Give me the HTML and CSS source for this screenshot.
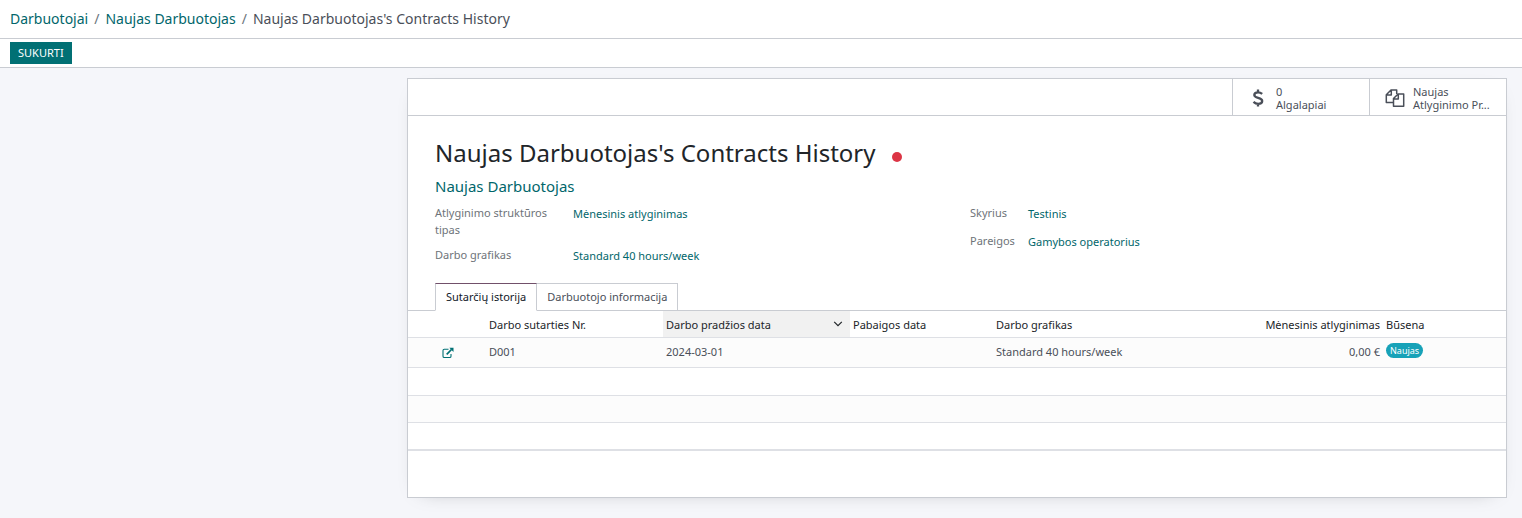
FILE: index.html
```html
<!DOCTYPE html>
<html lang="lt">
<head>
<meta charset="utf-8">
<title>Naujas Darbuotojas's Contracts History</title>
<link rel="stylesheet" href="styles.css">
</head>
<body>
<header class="control-panel">
  <nav class="breadcrumb" aria-label="Breadcrumb">
    <a href="#">Darbuotojai</a><span class="sep">/</span><a href="#">Naujas Darbuotojas</a><span class="sep">/</span><span>Naujas Darbuotojas's Contracts History</span>
  </nav>
</header>
<div class="statusbar"><button class="btn-primary" type="button">SUKURTI</button></div>
<main class="content">
  <section class="sheet">
    <div class="button-box">
      <button class="stat-button" type="button">
        <svg class="stat-icon" viewBox="0 0 20 20" aria-hidden="true"><path d="M14.2 5.9C13 4.9 11.700 4.300 10 4.300c-2.300 0-3.700 1.100-3.700 2.700 0 3.700 7.900 2 7.900 5.900 0 1.800-1.600 2.900-4 2.900-1.900 0-3.400-.7-4.700-1.900M10 1.500v3M10 15.500v3" fill="none" stroke="currentColor" stroke-width="2.300"/></svg>
        <span class="stat-text"><span>0</span><span>Algalapiai</span></span>
      </button>
      <button class="stat-button" type="button">
        <svg class="stat-icon" viewBox="0 0 20 20" aria-hidden="true"><path d="M8.500 14.500H1.300V6.700L6 1.900h5.700v4M6.300 1.900v5H1.300M8.500 10.600l4.600-4.700h5.600v12.400H8.500zM13.300 5.900v5H8.500" fill="none" stroke="currentColor" stroke-width="1.500" stroke-linejoin="round"/></svg>
        <span class="stat-text"><span>Naujas</span><span>Atlyginimo Pr...</span></span>
      </button>
    </div>
    <div class="sheet-body">
      <div class="title-row">
        <h1 class="title">Naujas Darbuotojas's Contracts History</h1>
        <span class="state-dot"></span>
      </div>
      <h2 class="subtitle"><a href="#">Naujas Darbuotojas</a></h2>
      <div class="groups">
        <dl class="group group-wide">
          <dt>Atlyginimo struktūros tipas</dt><dd><a href="#">Mėnesinis atlyginimas</a></dd>
          <dt>Darbo grafikas</dt><dd><a href="#">Standard 40 hours/week</a></dd>
        </dl>
        <dl class="group group-narrow">
          <dt>Skyrius</dt><dd><a href="#">Testinis</a></dd>
          <dt>Pareigos</dt><dd><a href="#">Gamybos operatorius</a></dd>
        </dl>
      </div>
    </div>
    <div class="tabs" role="tablist">
      <button class="tab tab-active" type="button" role="tab" aria-selected="true">Sutarčių istorija</button>
      <button class="tab" type="button" role="tab" aria-selected="false">Darbuotojo informacija</button>
    </div>
    <table class="list">
      <colgroup><col class="c-open"><col class="c-name"><col class="c-start"><col class="c-end"><col class="c-schedule"><col class="c-wage"><col class="c-state"></colgroup>
      <thead>
        <tr>
          <th></th><th>Darbo sutarties Nr.</th>
          <th class="sorted"><div class="sort-head"><span>Darbo pradžios data</span><svg class="chevron" viewBox="0 0 10 10" aria-hidden="true"><path d="M1.200 1.800L5 5.600l3.800-3.800" fill="none" stroke="currentColor" stroke-width="1.200"/></svg></div></th>
          <th>Pabaigos data</th><th>Darbo grafikas</th><th class="num">Mėnesinis atlyginimas</th><th>Būsena</th>
        </tr>
      </thead>
      <tbody>
        <tr class="record">
          <td class="open-cell"><button class="open-button" type="button" aria-label="Open"><svg class="open-icon" viewBox="0 0 12 12" aria-hidden="true"><path d="M6.500 2.300H2.300Q1 2.300 1 3.600v5.600q0 1.300 1.300 1.300h5.400Q9 10.500 9 9.200V7" fill="none" stroke="currentColor" stroke-width="1.100"/><path d="M4.700 7.300L9.500 2.500" stroke="currentColor" stroke-width="1.700"/><path d="M7.300.8h4.200V5z" fill="currentColor"/></svg></button></td>
          <td>D001</td><td>2024-03-01</td><td></td><td>Standard 40 hours/week</td><td class="num">0,00 €</td><td><span class="badge">Naujas</span></td>
        </tr>
        <tr><td colspan="7"></td></tr>
        <tr><td colspan="7"></td></tr>
        <tr><td colspan="7"></td></tr>
      </tbody>
    </table>
  </section>
</main>
</body>
</html>
```
FILE: styles.css
```css
* { box-sizing: border-box; }
body {
  margin: 0;
  min-height: 100vh;
  background: #f5f6fa;
  color: #4a4f59;
  font: 11px/17px "Noto Sans", "Open Sans", sans-serif;
}
a { color: #01666b; text-decoration: none; }
button { font: inherit; color: inherit; background: none; border: 0; padding: 0; cursor: pointer; }
.control-panel {
  padding: 9px 10px;
  background: #fff;
  border-bottom: 1px solid #c9ccd2;
}
.breadcrumb { font-size: 14px; line-height: 20px; }
.sep { padding: 0 6px; color: #6c757d; }
.statusbar {
  display: flex;
  padding: 3px 10px;
  background: #fff;
  border-bottom: 1px solid #c9ccd2;
}
.btn-primary {
  padding: 0 8px;
  background: #017074;
  color: #fff;
  line-height: 22px;
}
.content { display: flex; justify-content: flex-end; padding: 10px 15px 20px; }
.sheet {
  flex: 0 1 1100px;
  min-width: 0;
  padding-bottom: 46px;
  background: #fff;
  border: 1px solid #c9ccd2;
  box-shadow: 0 5px 20px -15px rgba(0, 0, 0, 0.4);
}
.button-box { display: flex; justify-content: flex-end; border-bottom: 1px solid #c9ccd2; }
.stat-button {
  display: flex;
  align-items: center;
  gap: 8px;
  width: 137px;
  height: 36px;
  padding: 2px 14px 0 15px;
  border-left: 1px solid #c9ccd2;
  line-height: 13px;
  text-align: left;
}
.stat-icon { flex: none; width: 20px; height: 20px; }
.stat-text { display: flex; flex-direction: column; white-space: nowrap; }
.sheet-body { padding: 20px 27px 0; }
.title-row { display: flex; align-items: center; gap: 16px; }
.title { margin: 0; color: #212529; font-size: 24px; font-weight: 400; line-height: 34px; }
.state-dot { width: 10px; height: 10px; margin-top: 8px; border-radius: 50%; background: #dc3545; }
.subtitle { margin: 6px 0 0; font-size: 15px; font-weight: 400; line-height: 20px; }
.groups { display: grid; grid-template-columns: 1fr 1fr; gap: 26px; margin-top: 8px; }
.group { display: grid; gap: 8px 0; align-content: start; margin: 0; }
.group-wide { grid-template-columns: 138px 1fr; }
.group-narrow { grid-template-columns: 58px 1fr; row-gap: 10px; }
.group dt { padding-right: 16px; color: #6e7379; }
.group-narrow dt { padding-right: 0; }
.group dd { margin: 0; padding-top: 1px; }
.tabs { display: flex; margin-top: 19px; padding: 0 27px; border-bottom: 1px solid #c9ccd2; }
.tab {
  margin-bottom: -1px;
  padding: 4px 10px 5px;
  border: 1px solid #c9ccd2;
  line-height: 17px;
}
.tab + .tab { border-left: 0; }
.tab-active { border-top-color: #71506a; border-bottom-color: #fff; color: #111827; }
.list { width: 100%; border-collapse: separate; border-spacing: 0; table-layout: fixed; border-bottom: 1px solid #dee0e5; }
.c-open { width: 78px; }
.c-name { width: 177px; }
.c-start { width: 187px; }
.c-end { width: 143px; }
.c-wage { width: 150px; }
.c-state { width: 123px; }
.list th, .list td { height: 27px; padding: 0 3px; border-bottom: 1px solid #dee0e5; text-align: left; white-space: nowrap; }
.list th { color: #212529; font-weight: 400; padding-top: 1px; }
.list .record td { height: 30px; padding-bottom: 2px; }
.list tbody tr:nth-child(2) td { height: 28px; }
.list tbody tr:nth-child(odd) { background: #fcfcfc; }
.list .num { text-align: right; }
.list .sorted { background: #f1f1f1; }
.sort-head { display: flex; align-items: center; justify-content: space-between; }
.chevron { width: 10px; height: 10px; margin-right: 4px; }
.list .open-cell { padding-left: 34px; }
.open-button { display: block; margin-top: 3px; color: #017074; }
.open-icon { display: block; width: 12px; height: 12px; }
.badge {
  display: inline-block;
  padding: 0 4px;
  border-radius: 8px;
  background: #17a2b8;
  color: #fff;
  font-size: 9px;
  line-height: 15px;
  vertical-align: 2px;
}
```
